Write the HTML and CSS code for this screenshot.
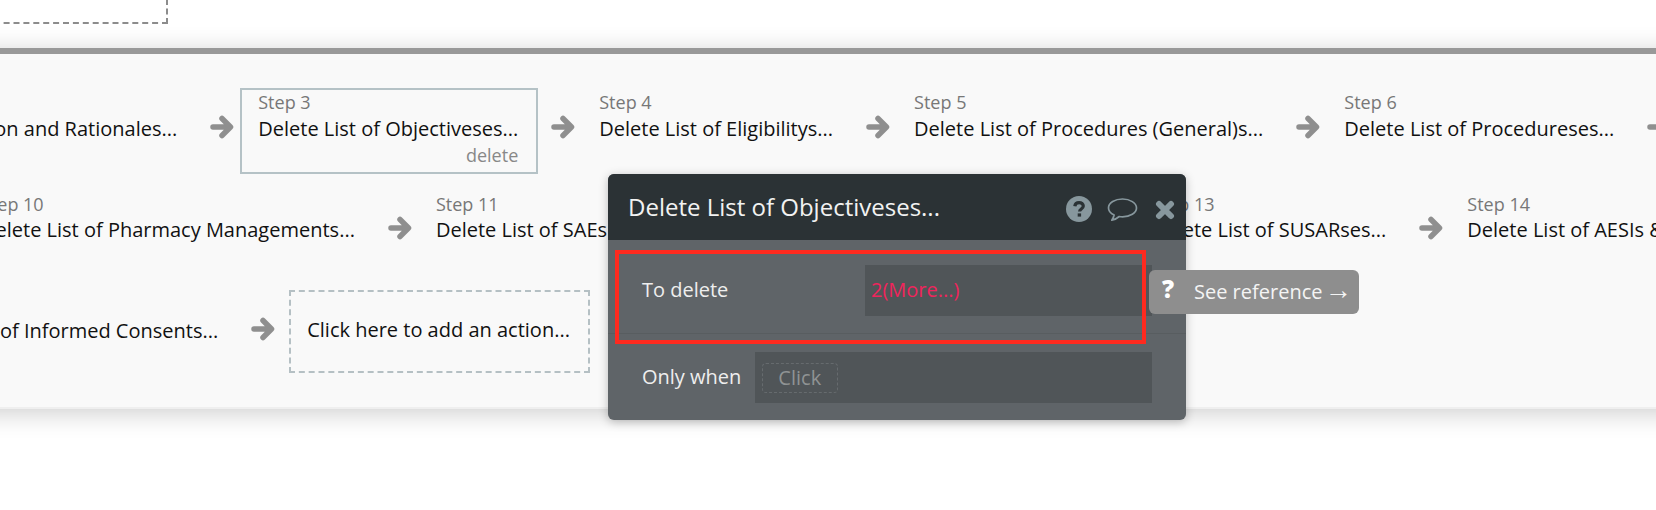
FILE: index.html
```html
<!DOCTYPE html>
<html lang="en">
<head>
  <meta charset="UTF-8">
  <title>Workflow editor</title>
  <link rel="stylesheet" href="styles.css">
</head>
<body>
  <svg width="0" height="0" class="defs">
    <symbol id="arrow" viewBox="0 0 24 24">
      <path d="M3 12h17M12 3.500l8.500 8.500-8.500 8.500" fill="none" stroke="#8f8f8f" stroke-width="5.500" stroke-linecap="round" stroke-linejoin="round"/>
    </symbol>
  </svg>

  <div class="top-area">
    <div class="old-group"></div>
  </div>

  <!-- workflow canvas -->
  <div class="canvas">
    <div class="row row-one">
      <div class="node"><span class="step">Step 2</span><span class="name">Delete List of Introduction and Rationales...</span></div>
      <svg class="arrow"><use href="#arrow"/></svg>
      <div class="node selected">
        <span class="step">Step 3</span>
        <span class="name">Delete List of Objectiveses...</span>
        <span class="action">delete</span>
      </div>
      <svg class="arrow"><use href="#arrow"/></svg>
      <div class="node"><span class="step">Step 4</span><span class="name">Delete List of Eligibilitys...</span></div>
      <svg class="arrow"><use href="#arrow"/></svg>
      <div class="node"><span class="step">Step 5</span><span class="name">Delete List of Procedures (General)s...</span></div>
      <svg class="arrow"><use href="#arrow"/></svg>
      <div class="node"><span class="step">Step 6</span><span class="name">Delete List of Procedureses...</span></div>
      <svg class="arrow"><use href="#arrow"/></svg>
    </div>

    <div class="row row-two">
      <div class="node"><span class="step">Step 10</span><span class="name">Delete List of Pharmacy Managements...</span></div>
      <svg class="arrow"><use href="#arrow"/></svg>
      <div class="node node-hidden"><span class="step">Step 11</span><span class="name">Delete List of SAEs...</span></div>
      <div class="node"><span class="step">Step 13</span><span class="name">Delete List of SUSARses...</span></div>
      <svg class="arrow"><use href="#arrow"/></svg>
      <div class="node"><span class="step">Step 14</span><span class="name">Delete List of AESIs &amp; SUSARs...</span></div>
    </div>

    <div class="row row-three">
      <div class="node"><span class="step">Step 20</span><span class="name">Delete List of Informed Consents...</span></div>
      <svg class="arrow"><use href="#arrow"/></svg>
      <div class="add-action">Click here to add an action...</div>
    </div>
  </div>

  <!-- property editor -->
  <div class="editor">
    <div class="editor-head">
      <span class="editor-title">Delete List of Objectiveses...</span>
      <div class="editor-icons">
        <svg class="icon-help" width="26" height="26" viewBox="0 0 26 26">
          <circle cx="13" cy="13" r="13" fill="#87979d"/>
          <path d="M8.800 10.300c.3-2.400 2-3.700 4.300-3.700 2.400 0 4.200 1.400 4.200 3.500 0 2.900-3.700 2.900-3.700 5.300" fill="none" stroke="#2b3235" stroke-width="3.200"/>
          <rect x="11.700" y="17.400" width="3.400" height="3.200" fill="#2b3235"/>
        </svg>
        <svg width="31" height="26" viewBox="0 0 31 26">
          <path d="M15.500 2C8 2 1.500 5.800 1.500 11c0 3 2.200 5.400 5.600 7-.3 1.800-1.200 3.600-2.300 5.200 2.800-.5 5.500-2 7.500-3.700 1 .2 2.100.3 3.200.3 7.500 0 14-3.800 14-8.800S23 2 15.500 2z" fill="none" stroke="#87979d" stroke-width="1.700" stroke-linejoin="round"/>
        </svg>
        <svg width="20" height="20" viewBox="0 0 20 20">
          <path d="M4 4l12 12M16 4L4 16" fill="none" stroke="#87979d" stroke-width="6" stroke-linecap="round"/>
        </svg>
      </div>
    </div>
    <div class="field field-delete">
      <span class="field-label label-wide">To delete</span>
      <div class="field-input"><span class="field-value">2(More...)</span></div>
    </div>
    <div class="field field-when">
      <span class="field-label">Only when</span>
      <div class="field-input"><span class="click-pill">Click</span></div>
    </div>
  </div>

  <div class="highlight"></div>

  <div class="hint">
    <span class="hint-mark">?</span>
    <span class="hint-text">See reference <span class="hint-arrow">→</span></span>
  </div>
</body>
</html>
```

FILE: styles.css
```css
html, body {
  margin: 0;
  height: 510px;
  overflow: hidden;
  background-color: #fff;
  font-family: "Open Sans", sans-serif;
}

.defs {
  position: absolute;
}

.top-area {
  height: 48px;
  overflow: hidden;
}

.old-group {
  width: 200px;
  height: 40px;
  margin: -20px 0 0 -36px;
  border: 2px dashed #8c8c8c;
}

.canvas {
  height: 361px;
  margin: 0 -40px;
  padding: 34px 0 0 40px;
  box-sizing: border-box;
  border-top: 6px solid #999;
  border-bottom: 2px solid #efefef;
  background-color: #f9f9f9;
  box-shadow: 0 4px 24px rgba(0, 0, 0, 0.2);
  overflow: hidden;
  display: flex;
  flex-direction: column;
  gap: 16px;
}

.row {
  display: flex;
  align-items: flex-start;
  height: 85px;
  white-space: nowrap;
}

.row-one {
  margin-left: -242px;
}

.row-two {
  margin-left: -37px;
}

.row-three {
  margin-left: -121px;
}

.node {
  flex: none;
  box-sizing: border-box;
  height: 85px;
  padding: 0 18px 0 16px;
  border: 2px solid transparent;
  display: flex;
  flex-direction: column;
  font-size: 20px;
  line-height: 26px;
}

.node.selected {
  height: 86px;
  border-color: #b5c2c6;
}

.node-hidden {
  width: 716px;
}

.step {
  font-size: 18px;
  color: #777;
}

.row-one .step {
  margin: -1px 0 1px;
}

.name {
  color: #111;
}

.action {
  align-self: flex-end;
  font-size: 18px;
  color: #888;
}

.arrow {
  flex: none;
  width: 24px;
  height: 24px;
  margin: 27px 6px 0 13px;
}

.add-action {
  flex: none;
  box-sizing: border-box;
  height: 83px;
  margin-left: 8px;
  padding: 0 18px 4px 16px;
  border: 2px dashed #b5c0c4;
  display: flex;
  align-items: center;
  font-size: 20px;
  color: #111;
}

/* floating editor */
.editor {
  position: absolute;
  left: 608px;
  top: 174px;
  width: 578px;
  height: 246px;
  border-radius: 6px;
  overflow: hidden;
  background-color: #5f6468;
  box-shadow: 0 2px 10px rgba(0, 0, 0, 0.25);
  color: #eee;
}

.editor-head {
  height: 66px;
  padding: 0 11px 2px 20px;
  box-sizing: border-box;
  background-color: #2b3235;
  display: flex;
  align-items: center;
  justify-content: space-between;
}

.editor-title {
  font-size: 24px;
  color: #f2f2f2;
}

.editor-icons {
  display: flex;
  align-items: center;
  gap: 17px;
  padding-top: 8px;
}

.icon-help {
  margin: -3px -2px 0 0;
}

.field {
  display: flex;
  padding: 0 34px;
  font-size: 20px;
}

.field-delete {
  height: 94px;
  padding-top: 25px;
  box-sizing: border-box;
  border-bottom: 1px solid #585d60;
}

.field-when {
  padding-top: 18px;
  gap: 14px;
}

.field-label {
  height: 51px;
  line-height: 50px;
}

.label-wide {
  width: 223px;
}

.field-input {
  flex: 1;
  height: 51px;
  padding-left: 6px;
  box-sizing: border-box;
  background-color: #505558;
  display: flex;
  align-items: center;
}

.field-value {
  padding-bottom: 2px;
  color: #f0245c;
}

.click-pill {
  margin-left: 1px;
  padding: 0 16px 0 15px;
  height: 28px;
  line-height: 27px;
  border: 1px dashed #666b6e;
  border-radius: 4px;
  color: #8f9394;
}

/* red annotation on top of the screenshot */
.highlight {
  position: absolute;
  left: 615px;
  top: 250px;
  width: 523px;
  height: 86px;
  border: 4px solid #ff2a1f;
}

.hint {
  position: absolute;
  left: 1149px;
  top: 270px;
  width: 210px;
  height: 44px;
  border-radius: 6px;
  background-color: #8e8e8e;
  display: flex;
  align-items: center;
  font-size: 20px;
  color: #f4f4f4;
}

.hint-mark {
  width: 38px;
  margin-right: 7px;
  padding-bottom: 7px;
  text-align: center;
  font-size: 24px;
  font-weight: 800;
  color: #fff;
}

.hint-text {
  padding-bottom: 2px;
}

.hint-arrow {
  margin-left: -3px;
  font-family: "Liberation Sans", sans-serif;
  font-size: 27px;
  line-height: 1;
}
```
